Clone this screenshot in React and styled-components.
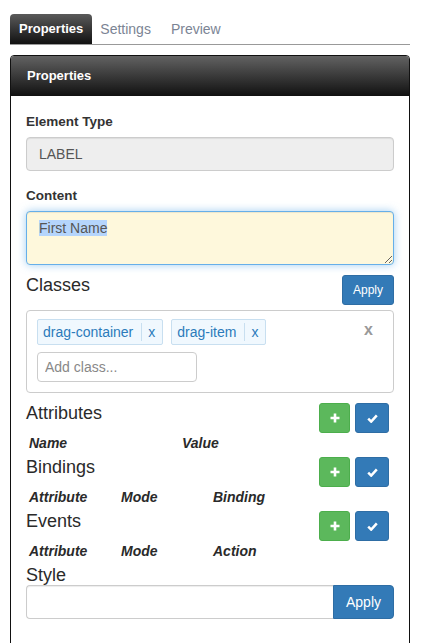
import styled, { createGlobalStyle } from 'styled-components';

const GlobalStyle = createGlobalStyle`
    body {
        margin: 0;
        background: #fff;
        font-family: "Liberation Sans", Helvetica, Arial, sans-serif;
        font-size: 14px;
        color: #333;
    }
    * { box-sizing: border-box; }
`

const Page = styled.div`
    width: 400px;
    margin: 14px 0 0 10px;
`
const Tabs = styled.div`
    display: flex;
    align-items: flex-end;
    border-bottom: 1px solid #999;
`
const Tab = styled.div`
    height: 30px;
    line-height: 30px;
    padding: ${p => p.$active ? '0 9px' : '0 12px 0 8px'};
    border-radius: 4px 4px 0 0;
    font-size: ${p => p.$active ? '13px' : '14px'};
    font-weight: ${p => p.$active ? 'bold' : 'normal'};
    color: ${p => p.$active ? '#fff' : '#7b8494'};
    background: ${p => p.$active ? 'linear-gradient(#5a5a5a, #111)' : 'transparent'};
`
const Panel = styled.div`
    margin-top: 10px;
    border: 1px solid #111;
    border-radius: 4px;
`
const PanelHeading = styled.div`
    height: 40px;
    line-height: 40px;
    padding-left: 16px;
    border-radius: 3px 3px 0 0;
    background: linear-gradient(#626262, #111);
    color: #fff;
    font-size: 13px;
    font-weight: bold;
`
const PanelBody = styled.div`
    padding: 16px 15px 40px;
`
const FormGroup = styled.div`
    margin-bottom: ${p => p.$mb || 15}px;
`
const FieldLabel = styled.label`
    display: block;
    font-size: 13.5px;
    font-weight: bold;
    line-height: 20px;
    margin-bottom: 5px;
`
const ReadOnlyInput = styled.input`
    display: block;
    width: 100%;
    height: 34px;
    padding: 6px 12px;
    border: 1px solid #ccc;
    border-radius: 4px;
    background: #eee;
    box-shadow: inset 0 1px 1px rgba(0,0,0,.075);
    font: inherit;
    font-size: 14px;
    color: #555;
`
const ContentArea = styled.div`
    min-height: 54px;
    padding: 6px 12px;
    border: 1px solid #66afe9;
    border-radius: 4px;
    background: #fef8dc;
    box-shadow: inset 0 1px 1px rgba(0,0,0,.075), 0 0 8px rgba(102,175,233,.6);
    line-height: 20px;
    color: #555;
    overflow: auto;
    resize: vertical;
`
const Selected = styled.span`
    background: #b5d5fc;
`
const SectionRow = styled.div`
    display: flex;
    justify-content: space-between;
    align-items: flex-start;
    min-height: 30px;
    margin-top: ${p => p.$mt || 0}px;
`
const SectionTitle = styled.h4`
    margin: ${p => p.$mt || 0}px 0 0;
    font-size: 18px;
    font-weight: normal;
    line-height: 20px;
    color: #2a2a2a;
`
const SmallButton = styled.button`
    height: 30px;
    padding: 0 10px;
    border: 1px solid #2e6da4;
    border-radius: 3px;
    background: #337ab7;
    color: #fff;
    font: inherit;
    font-size: 12px;
`
const ClassBox = styled.div`
    margin-top: 5px;
    padding: 8px 10px 10px;
    border: 1px solid #ccc;
    border-radius: 4px;
`
const TagRow = styled.div`
    display: flex;
    align-items: flex-start;
    gap: 8px;
    margin-bottom: 7px;
`
const Tag = styled.div`
    display: flex;
    align-items: stretch;
    height: 26px;
    line-height: 24px;
    border: 1px solid #c8dff0;
    border-radius: 2px;
    background: #f0f8fe;
    color: #2b7bbb;
    font-size: 14px;
`
const TagText = styled.span`
    padding: 0 8px 0 5px;
`
const TagRemove = styled.span`
    margin: 3px 0;
    padding: 0 7px 0 6px;
    line-height: 18px;
    border-left: 1px solid #c8dff0;
`
const ClearAll = styled.span`
    margin: 2px 10px 0 auto;
    font-size: 16px;
    font-weight: bold;
    color: #999;
    line-height: 18px;
`
const AddInput = styled.input`
    display: block;
    width: 160px;
    height: 30px;
    padding: 5px 7px;
    border: 1px solid #ccc;
    border-radius: 4px;
    font: inherit;
    font-size: 14px;
    color: #555;
    &::placeholder { color: #888; }
`
const ButtonGroup = styled.div`
    display: flex;
    gap: 5px;
    margin-right: 5px;
`
const IconButton = styled.button`
    display: flex;
    align-items: center;
    justify-content: center;
    width: ${p => p.$w}px;
    height: 30px;
    padding: 0;
    border-radius: 3px;
    border: 1px solid ${p => p.$variant === 'success' ? '#4cae4c' : '#2e6da4'};
    background: ${p => p.$variant === 'success' ? '#5cb85c' : '#337ab7'};
`
const ColumnLabels = styled.div`
    display: grid;
    grid-template-columns: ${p => p.$cols};
    padding-left: 3px;
    margin-bottom: 4px;
    font-size: 14px;
    font-weight: bold;
    font-style: italic;
    line-height: 20px;
    color: #2a2a2a;
`
const InputGroup = styled.div`
    display: flex;
    height: 34px;
`
const StyleInput = styled.input`
    flex: 1;
    min-width: 0;
    height: 34px;
    padding: 6px 12px;
    border: 1px solid #ccc;
    border-right: none;
    border-radius: 4px 0 0 4px;
    box-shadow: inset 0 1px 1px rgba(0,0,0,.075);
    font: inherit;
`
const GroupButton = styled.button`
    width: 61px;
    height: 34px;
    padding: 0;
    border: 1px solid #2e6da4;
    border-radius: 0 4px 4px 0;
    background: #337ab7;
    color: #fff;
    font: inherit;
    font-size: 14px;
`

const PlusIcon = () => (
    <svg width="10" height="10" viewBox="0 0 10 10">
        <path d="M5 0.5v9M0.5 5h9" stroke="#fff" strokeWidth="2.6" />
    </svg>
)
const CheckIcon = () => (
    <svg width="11" height="9" viewBox="0 0 11 9">
        <path d="M1.2 4.6l3 3L9.8 1.4" stroke="#fff" strokeWidth="2.5" fill="none" />
    </svg>
)

function Section({ title, cols, labels, mt }) {
    return (
        <>
            <SectionRow $mt={mt}>
                <SectionTitle>{title}</SectionTitle>
                <ButtonGroup>
                    <IconButton $variant="success" $w={31}><PlusIcon /></IconButton>
                    <IconButton $variant="primary" $w={34}><CheckIcon /></IconButton>
                </ButtonGroup>
            </SectionRow>
            <ColumnLabels $cols={cols}>
                {labels.map(l => <span key={l}>{l}</span>)}
            </ColumnLabels>
        </>
    )
}

export default function App() {
    return (
        <Page>
            <GlobalStyle />
            <Tabs>
                <Tab $active>Properties</Tab>
                <Tab>Settings</Tab>
                <Tab>Preview</Tab>
            </Tabs>
            <Panel>
                <PanelHeading>Properties</PanelHeading>
                <PanelBody>
                    <FormGroup>
                        <FieldLabel>Element Type</FieldLabel>
                        <ReadOnlyInput readOnly value="LABEL" />
                    </FormGroup>
                    <FormGroup $mb={10}>
                        <FieldLabel>Content</FieldLabel>
                        <ContentArea><Selected>First Name</Selected></ContentArea>
                    </FormGroup>

                    <SectionRow>
                        <SectionTitle>Classes</SectionTitle>
                        <SmallButton>Apply</SmallButton>
                    </SectionRow>
                    <ClassBox>
                        <TagRow>
                            <Tag><TagText>drag-container</TagText><TagRemove>x</TagRemove></Tag>
                            <Tag><TagText>drag-item</TagText><TagRemove>x</TagRemove></Tag>
                            <ClearAll>x</ClearAll>
                        </TagRow>
                        <AddInput placeholder="Add class..." />
                    </ClassBox>

                    <Section mt={10} title="Attributes" cols="153px 1fr" labels={['Name', 'Value']} />
                    <Section title="Bindings" cols="92px 92px 1fr" labels={['Attribute', 'Mode', 'Binding']} />
                    <Section title="Events" cols="92px 92px 1fr" labels={['Attribute', 'Mode', 'Action']} />

                    <SectionTitle $mt={2}>Style</SectionTitle>
                    <InputGroup>
                        <StyleInput />
                        <GroupButton>Apply</GroupButton>
                    </InputGroup>
                </PanelBody>
            </Panel>
        </Page>
    );
}
